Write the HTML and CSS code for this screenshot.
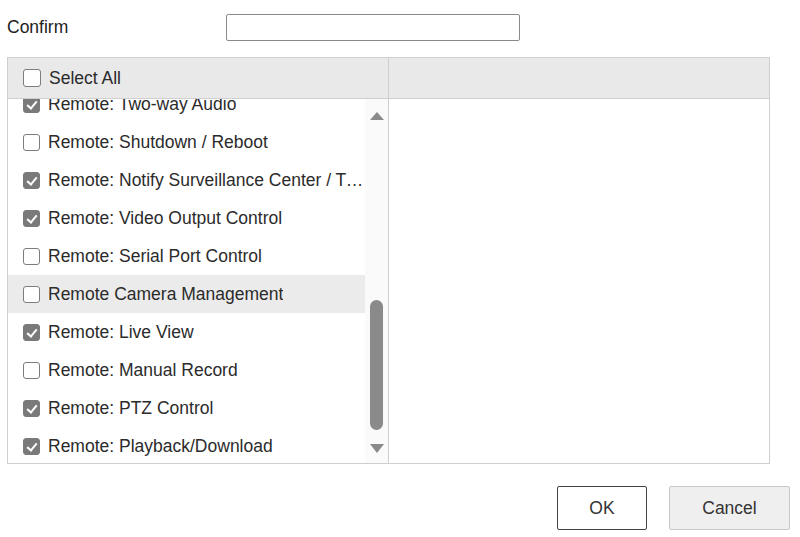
FILE: index.html
```html
<!DOCTYPE html>
<html>
<head>
<meta charset="utf-8">
<link rel="stylesheet" href="styles.css">
</head>
<body>
<div class="confirm-row">
  <label class="confirm-label">Confirm</label>
  <input class="confirm-input" type="password">
</div>
<div class="grid">
  <div class="head-cell">
    <span class="cb"></span><span class="label">Select All</span>
  </div>
  <div class="head-cell"></div>
  <div class="body-cell">
    <div class="list-wrap">
      <div class="list">
        <div class="row"><span class="cb on"></span><span class="label">Remote: Two-way Audio</span></div>
        <div class="row"><span class="cb"></span><span class="label">Remote: Shutdown / Reboot</span></div>
        <div class="row"><span class="cb on"></span><span class="label">Remote: Notify Surveillance Center / Trigger Alarm Output</span></div>
        <div class="row"><span class="cb on"></span><span class="label">Remote: Video Output Control</span></div>
        <div class="row"><span class="cb"></span><span class="label">Remote: Serial Port Control</span></div>
        <div class="row hover"><span class="cb"></span><span class="label">Remote Camera Management</span></div>
        <div class="row"><span class="cb on"></span><span class="label">Remote: Live View</span></div>
        <div class="row"><span class="cb"></span><span class="label">Remote: Manual Record</span></div>
        <div class="row"><span class="cb on"></span><span class="label">Remote: PTZ Control</span></div>
        <div class="row"><span class="cb on"></span><span class="label">Remote: Playback/Download</span></div>
      </div>
    </div>
    <div class="scrollbar">
      <span class="arrow up"></span>
      <div class="track"><span class="thumb"></span></div>
      <span class="arrow down"></span>
    </div>
  </div>
  <div class="body-cell empty"></div>
</div>
<div class="actions">
  <button class="btn ok">OK</button>
  <button class="btn cancel">Cancel</button>
</div>
</body>
</html>
```
FILE: styles.css
```css
html, body {
  margin: 0;
  padding: 0;
  background: #fff;
  font-family: "Liberation Sans", Arial, sans-serif;
  font-size: 17.5px;
  color: #2b2b2b;
}
.confirm-row {
  display: flex;
  align-items: center;
  padding: 14px 0 0 7px;
}
.confirm-label {
  width: 219px;
  color: #222;
}
.confirm-input {
  box-sizing: border-box;
  width: 294px;
  height: 27px;
  margin: 0;
  border: 1px solid #8a8a8a;
  border-radius: 2px;
  background: #fff;
}
.grid {
  margin: 16px 0 0 7px;
  width: 761px;
  display: grid;
  grid-template-columns: 380px 380px;
  grid-template-rows: 40px 364px;
  gap: 1px;
  background: #cfcfcf;
  border: 1px solid #cfcfcf;
}
.head-cell {
  background: #e9e9e9;
  display: flex;
  align-items: center;
  padding-left: 15px;
}
.head-cell .cb {
  width: 18px;
  height: 18px;
  margin-right: 8px;
}
.body-cell {
  background: #fff;
  display: flex;
  overflow: hidden;
}
.list-wrap {
  width: 357px;
  overflow: hidden;
}
.list {
  margin-top: -14px;
}
.row {
  height: 38px;
  display: flex;
  align-items: center;
  padding: 0 0 0 15px;
}
.row.hover {
  background: #ebebeb;
}
.label {
  white-space: nowrap;
  overflow: hidden;
  text-overflow: ellipsis;
}
.cb {
  box-sizing: border-box;
  flex: none;
  width: 17px;
  height: 17px;
  margin-right: 8px;
  border: 1px solid #7d7d7d;
  border-radius: 3px;
  background: #fff;
  position: relative;
}
.cb.on {
  background: #7a7a7a;
  border-color: #7a7a7a;
}
.cb.on::after {
  content: "";
  position: absolute;
  left: 5px;
  top: 2px;
  width: 4px;
  height: 8px;
  border: solid #fff;
  border-width: 0 2px 2px 0;
  transform: rotate(40deg);
}
.scrollbar {
  width: 23px;
  background: #fafafa;
  display: flex;
  flex-direction: column;
  align-items: center;
  padding: 13px 0 10px;
  box-sizing: border-box;
}
.arrow {
  width: 0;
  height: 0;
  border-left: 7px solid transparent;
  border-right: 7px solid transparent;
}
.arrow.up {
  border-bottom: 8px solid #8a8a8a;
}
.arrow.down {
  border-top: 9px solid #8a8a8a;
}
.track {
  flex: 1;
  display: flex;
  flex-direction: column;
  padding: 180px 0 13px;
}
.thumb {
  width: 13px;
  height: 130px;
  border-radius: 7px;
  background: #8a8a8a;
}
.actions {
  display: flex;
  justify-content: flex-end;
  gap: 22px;
  margin: 22px 10px 0 0;
}
.btn {
  font-family: "Liberation Sans", Arial, sans-serif;
  font-size: 17.5px;
  color: #333;
  height: 44px;
  border-radius: 2px;
  cursor: pointer;
}
.btn.ok {
  width: 90px;
  background: #fff;
  border: 1px solid #444;
}
.btn.cancel {
  width: 121px;
  background: #efefef;
  border: 1px solid #c8c8c8;
}
```
